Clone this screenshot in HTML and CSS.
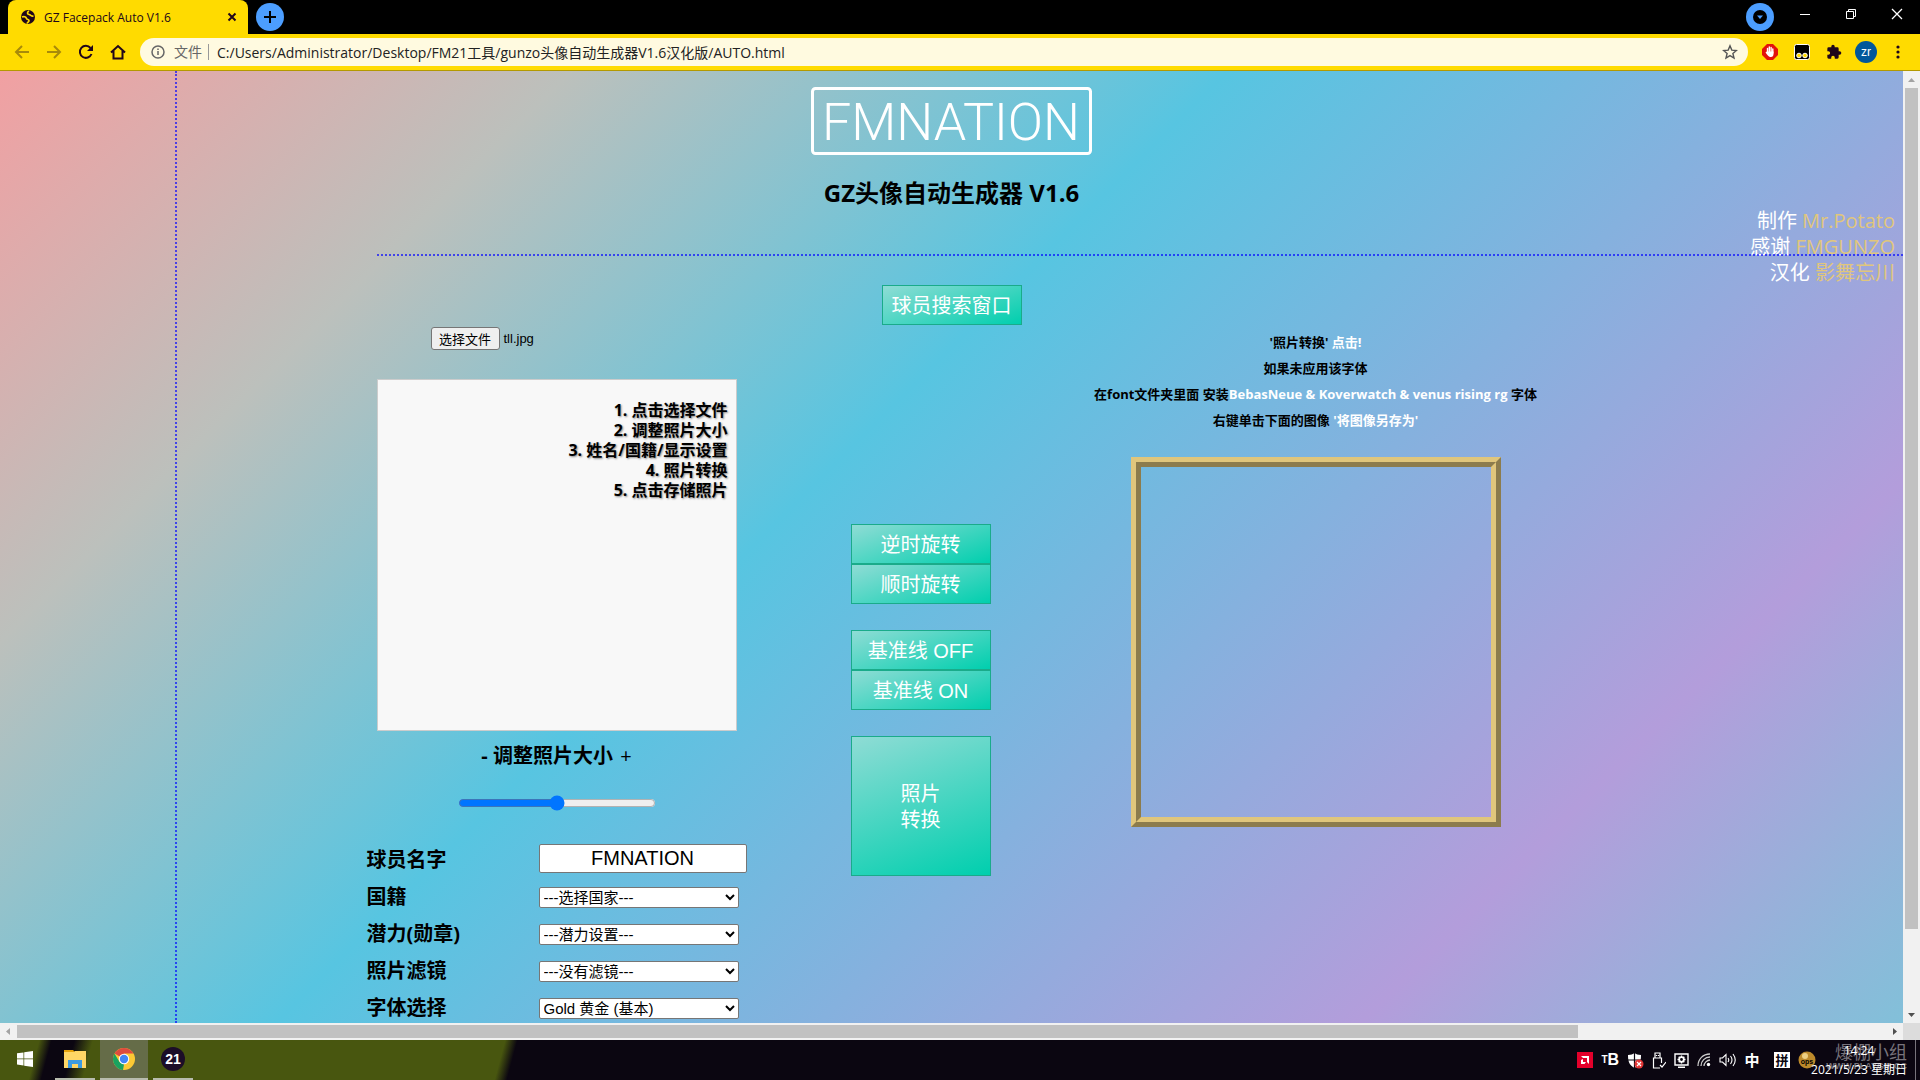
FILE: index.html
```
<!DOCTYPE html>
<html lang="zh-CN">
<head>
  <meta charset="UTF-8">
  <meta name="viewport" content="width=device-width, initial-scale=1.0">
  <title>GZ Facepack Auto V1.6</title>
  <link rel="stylesheet" href="styles.css">
</head>
<body>
<header class="tab-strip">
  <div class="tab">
    <svg class="tab-icon" width="16" height="16" viewBox="0 0 16 16"><circle cx="8" cy="8" r="7" fill="#20061a"/><path d="M2 8c2-1 4 0 4.500 1.500S9 10 9 11.500 7.500 13 7 14.500M9 2C7 3 7 5 9 5.500s2 2 4.500 1.500" fill="none" stroke="#ffdb00" stroke-width="1.700"/></svg>
    <span class="tab-title">GZ Facepack Auto V1.6</span>
    <button class="icon-button" aria-label="关闭标签页"><svg width="10" height="10" viewBox="0 0 10 10"><path d="M1.500 1.500l7 7m0-7l-7 7" stroke="#20061a" stroke-width="2"/></svg></button>
  </div>
  <button class="round-button" aria-label="新标签页"><svg width="14" height="14" viewBox="0 0 14 14"><path d="M7 1v12M1 7h12" stroke="#000" stroke-width="2"/></svg></button>
  <div class="window-buttons">
    <button class="round-button" aria-label="搜索标签页"><svg width="14" height="14" viewBox="0 0 14 14"><circle cx="7" cy="7" r="7" fill="#000"/><path d="M4 5.500h6L7 9z" fill="#4c9eff"/></svg></button>
    <button class="window-button" aria-label="最小化"><svg width="12" height="12" viewBox="0 0 12 12"><path d="M1 6.500h10" stroke="#fff"/></svg></button>
    <button class="window-button" aria-label="还原"><svg width="12" height="12" viewBox="0 0 12 12"><path d="M1.500 3.500h7v7h-7zM3.500 3V1.500h7v7H9" fill="none" stroke="#fff"/></svg></button>
    <button class="window-button" aria-label="关闭"><svg width="12" height="12" viewBox="0 0 12 12"><path d="M1 1l10 10M11 1L1 11" stroke="#fff" stroke-width="1.300"/></svg></button>
  </div>
</header>

<nav class="toolbar">
  <button class="icon-button nav-off" aria-label="后退"><svg width="16" height="16" viewBox="0 0 16 16"><path d="M15 8H2m6-6L2 8l6 6" fill="none" stroke="currentColor" stroke-width="2"/></svg></button>
  <button class="icon-button nav-off" aria-label="前进"><svg width="16" height="16" viewBox="0 0 16 16"><path d="M1 8h13M8 2l6 6-6 6" fill="none" stroke="currentColor" stroke-width="2"/></svg></button>
  <button class="icon-button" aria-label="重新加载"><svg width="16" height="16" viewBox="0 0 16 16"><path d="M13.500 10A6 6 0 1 1 12.500 4" fill="none" stroke="currentColor" stroke-width="2"/><path d="M15 1v6H9z" fill="currentColor"/></svg></button>
  <button class="icon-button" aria-label="主页"><svg width="16" height="16" viewBox="0 0 16 16"><path d="M1 8.500L8 2l7 6.500M3.500 7v7.500h9V7" fill="none" stroke="currentColor" stroke-width="2"/></svg></button>
  <div class="address-bar">
    <svg width="16" height="16" viewBox="0 0 16 16"><circle cx="8" cy="8" r="6" fill="none" stroke="#666" stroke-width="1.500"/><path d="M8 7v4M8 4.500v1.500" stroke="#666" stroke-width="1.500"/></svg>
    <label class="address-kind" for="address">文件</label>
    <input class="address-input" id="address" type="text" value="C:/Users/Administrator/Desktop/FM21工具/gunzo头像自动生成器V1.6汉化版/AUTO.html">
    <button class="icon-button" aria-label="收藏"><svg width="16" height="16" viewBox="0 0 16 16"><path d="M8 1.800l1.800 4.300 4.600.4-3.500 3 1.100 4.600-4-2.500-4 2.500 1.100-4.600-3.500-3 4.600-.4z" fill="none" stroke="#555" stroke-width="1.400"/></svg></button>
  </div>
  <button class="icon-button" aria-label="广告拦截"><svg width="16" height="16" viewBox="0 0 16 16"><path d="M5 0h6l5 5v6l-5 5H5l-5-5V5z" fill="#e3120b"/><path d="M5.500 9V4.500M7.300 8V3M9.100 8V3.500M10.800 9V5" stroke="#fff" stroke-width="1.400" stroke-linecap="round"/><path d="M4.800 7.500h6.700v2.500c0 2-1 3-2.500 3S6.500 12.500 5 10.500L3.500 8.500z" fill="#fff"/></svg></button>
  <button class="icon-button" aria-label="脚本管理"><svg width="16" height="16" viewBox="0 0 16 16"><rect x=".5" y=".5" width="15" height="15" rx="2" fill="#000" stroke="#fff"/><circle cx="5" cy="11.500" r="2.300" fill="#ffdb00" stroke="#fff"/><circle cx="11" cy="11.500" r="2.300" fill="#ffdb00" stroke="#fff"/></svg></button>
  <button class="icon-button" aria-label="扩展程序"><svg width="16" height="16" viewBox="0 0 24 24"><path d="M20.500 11H19V7a2 2 0 0 0-2-2h-4V3.500a2.500 2.500 0 0 0-5 0V5H4a2 2 0 0 0-2 2v3.800h1.500a2.700 2.700 0 0 1 0 5.400H2V20a2 2 0 0 0 2 2h3.800v-1.500a2.700 2.700 0 0 1 5.400 0V22H17a2 2 0 0 0 2-2v-4h1.500a2.500 2.500 0 0 0 0-5z" fill="currentColor"/></svg></button>
  <button class="avatar">zr</button>
  <button class="icon-button" aria-label="菜单"><svg width="16" height="16" viewBox="0 0 16 16"><circle cx="8" cy="3" r="1.600" fill="currentColor"/><circle cx="8" cy="8" r="1.600" fill="currentColor"/><circle cx="8" cy="13" r="1.600" fill="currentColor"/></svg></button>
</nav>

<div class="viewport">
  <main class="page">
    <svg class="logo" width="282" height="68" viewBox="0 0 282 68" role="img" aria-label="FMNATION">
      <rect x="1.500" y="1.500" width="278" height="65" rx="3" fill="none" stroke="#fff" stroke-width="3"/>
      <text class="logo-text" x="140" y="53" text-anchor="middle">FMNATION</text>
    </svg>
    <h1 class="title">GZ头像自动生成器 V1.6</h1>
    <button class="action search-button">球员搜索窗口</button>

    <div class="columns">
      <section class="editor">
        <div class="file-row">
          <button class="file-button" onclick="document.getElementById('photo').click()">选择文件</button>
          <input id="photo" type="file" accept="image/*" aria-label="选择文件" hidden>
          <span>tll.jpg</span>
        </div>
        <div class="photo-area">
          1. 点击选择文件<br>
          2. 调整照片大小<br>
          3. 姓名/国籍/显示设置<br>
          4. 照片转换<br>
          5. 点击存储照片
        </div>
        <label class="zoom-label" for="zoom">- 调整照片大小 <span class="plus">+</span></label>
        <input class="zoom" id="zoom" type="range" min="0" max="100" value="50">
        <form class="settings">
          <label for="name">球员名字</label>
          <input class="name-input" id="name" type="text" value="FMNATION">
          <label for="nation">国籍</label>
          <select id="nation"><option>---选择国家---</option></select>
          <label for="medal">潜力(勋章)</label>
          <select id="medal"><option>---潜力设置---</option></select>
          <label for="filter">照片滤镜</label>
          <select id="filter"><option>---没有滤镜---</option></select>
          <label for="font">字体选择</label>
          <select id="font"><option>Gold 黄金 (基本)</option></select>
        </form>
      </section>

      <section class="actions">
        <div class="action-group">
          <button class="action">逆时旋转</button>
          <button class="action">顺时旋转</button>
        </div>
        <div class="action-group">
          <button class="action">基准线 OFF</button>
          <button class="action">基准线 ON</button>
        </div>
        <button class="action convert-button">照片<br>转换</button>
      </section>

      <section class="result">
        <p class="hint">'照片转换' <em>点击!</em></p>
        <p class="hint">如果未应用该字体</p>
        <p class="hint">在font文件夹里面 安装<em>BebasNeue &amp; Koverwatch &amp; venus rising rg</em> 字体</p>
        <p class="hint">右键单击下面的图像 <em>'将图像另存为'</em></p>
        <div class="frame"></div>
      </section>
    </div>

    <div class="credits">
      制作 <span>Mr.Potato</span><br>
      感谢 <span>FMGUNZO</span><br>
      汉化 <span>影舞忘川</span>
    </div>
    <div class="guide guide-vertical"></div>
    <div class="guide guide-horizontal"></div>
  </main>
  <div class="scrollbar scrollbar-y">
    <svg width="17" height="17" viewBox="0 0 17 17"><path d="M5 11l3.500-4 3.500 4z" fill="#a3a3a3"/></svg>
    <div class="track"><div class="thumb"></div></div>
    <svg width="17" height="17" viewBox="0 0 17 17"><path d="M5 7l3.500 4L12 7z" fill="#505050"/></svg>
  </div>
  <div class="scrollbar scrollbar-x">
    <svg width="17" height="17" viewBox="0 0 17 17"><path d="M10 5L6 8.500l4 3.500z" fill="#a3a3a3"/></svg>
    <div class="track"><div class="thumb"></div></div>
    <svg width="17" height="17" viewBox="0 0 17 17"><path d="M7 5l4 3.500L7 12z" fill="#505050"/></svg>
  </div>
  <div class="scroll-corner"></div>
</div>

<footer class="taskbar">
  <button class="task start" aria-label="开始"><svg width="16" height="16" viewBox="0 0 16 16"><path d="M0 2.300l6.500-.9v6.100H0zM7.200 1.300L16 0v7.500H7.200zM0 8.300h6.500v6.100L0 13.500zM7.200 8.300H16V16l-8.800-1.300z" fill="#fff"/></svg></button>
  <button class="task open" aria-label="文件资源管理器"><svg width="22" height="20" viewBox="0 0 22 20"><path d="M0 1h9l2 2H0z" fill="#e8a40c"/><path d="M0 3h10l1-1h11v17H0z" fill="#ffd666"/><path d="M4 11h14v8h-4v-4H8v4H4z" fill="#3d9be0"/></svg></button>
  <button class="task open active" aria-label="Chrome"><svg width="24" height="24" viewBox="0 0 24 24"><circle cx="12" cy="12" r="11" fill="#fbc934"/><path d="M12 12L2.500 6.500A11 11 0 0 1 21.500 6.500H12z" fill="#dd4b3e"/><path d="M2.500 6.500L7.500 15 12 17.500 11 23A11 11 0 0 1 2.500 6.500z" fill="#1aa260"/><circle cx="12" cy="12" r="5.200" fill="#fff"/><circle cx="12" cy="12" r="4.200" fill="#4285f4"/></svg></button>
  <button class="task open"><span class="fm-icon">21</span></button>

  <div class="tray">
    <svg width="16" height="16" viewBox="0 0 16 16"><path d="M0 0h16v16H0z" fill="#e4002b"/><path d="M4 4h8v8L10 10V6H6zM4 8l2-1v3h3l-1.500 2H4z" fill="#fff"/></svg>
    <span class="tray-tb"><small>T</small>B</span>
    <svg width="17" height="17" viewBox="0 0 17 17"><path d="M1 3c3 0 5-1 6.500-2C9 2 11 3 14 3c0 6-1 10-6.500 13C2 13 1 9 1 3z" fill="#fff"/><path d="M7.500 1v15M1 8h13" stroke="#0b0611" stroke-width="1.200"/><circle cx="12" cy="12" r="4.500" fill="#e03535"/><path d="M10 10l4 4m0-4l-4 4" stroke="#fff" stroke-width="1.200"/></svg>
    <svg width="14" height="17" viewBox="0 0 14 17"><path d="M3 6V1h5v5M9.500 11V6h-8v10H8M4.500 3v1M6.500 3v1M8 13l2 2 4-5" fill="none" stroke="#fff" stroke-width="1.200"/></svg>
    <svg width="15" height="15" viewBox="0 0 15 15"><path d="M1 1h13v11H1zM4 14.300h7" fill="none" stroke="#fff" stroke-width="1.400"/><circle cx="7.500" cy="6.500" r="2.300" fill="none" stroke="#fff" stroke-width="1.700"/><path d="M7.500 2.500v1.500M7.500 9v1.500M3.500 6.500H5M10 6.500h1.500M4.700 3.700l1 1M9.300 8.300l1 1M10.300 3.700l-1 1M5.700 8.300l-1 1" stroke="#fff" stroke-width="1.400"/></svg>
    <svg width="14" height="14" viewBox="0 0 14 14"><path d="M1 13C1 6 6 1 13 1M4 13c0-5 4-9 9-9M7 13c0-3 3-6 6-6" fill="none" stroke="#ccc" stroke-width="1.300"/><circle cx="11.500" cy="11.500" r="1.700" fill="#fff"/></svg>
    <svg width="17" height="14" viewBox="0 0 17 14"><path d="M1 5h2.500L7 1.500v11L3.500 9H1zM9 5q1.500 2 0 4M11.500 3q3 4 0 8M14 1q4.500 6 0 12" fill="none" stroke="#fff" stroke-width="1.100"/></svg>
    <span class="ime">中</span>
    <span class="ime ime-box">拼</span>
    <svg width="18" height="18" viewBox="0 0 18 18"><circle cx="9" cy="9" r="8.500" fill="#bd8a2b"/><circle cx="7" cy="5" r="3" fill="#edcf83"/><text class="ball-text" x="9" y="13" text-anchor="middle">ops</text></svg>
  </div>
  <div class="clock">
    <span>14:24</span>
    <span>2021/5/23 星期日</span>
    <div class="watermark">爆棚小组<small>WWW.PLAYGM.CC</small></div>
  </div>
</footer>
</body>
</html>
```

FILE: styles.css
```
* {
  box-sizing: border-box;
}
body {
  margin: 0;
  height: 100vh;
  display: flex;
  flex-direction: column;
  overflow: hidden;
  font-family: "Open Sans", "Noto Sans CJK SC", sans-serif;
}
button {
  padding: 0;
  border: 0;
  background: none;
  font-family: "Liberation Sans", "Noto Sans CJK SC", sans-serif;
  cursor: pointer;
}
svg {
  display: block;
  flex: none;
}

/* browser window */
.tab-strip {
  flex: none;
  height: 34px;
  display: flex;
  align-items: center;
  gap: 8px;
  padding-left: 8px;
  background: #000;
}
.tab {
  width: 240px;
  height: 34px;
  display: flex;
  align-items: center;
  gap: 8px;
  padding: 0 8px 0 12px;
  border-radius: 8px 8px 0 0;
  background: #ffdb00;
}
.tab-title {
  flex: 1;
  font-size: 12px;
  color: #20061a;
}
.icon-button {
  flex: none;
  min-width: 16px;
  height: 16px;
  display: flex;
  align-items: center;
  justify-content: center;
  color: #20061a;
}
.nav-off {
  color: #a88a0a;
}
.round-button {
  width: 28px;
  height: 28px;
  display: flex;
  align-items: center;
  justify-content: center;
  border-radius: 50%;
  background: #4c9eff;
}
.window-buttons {
  display: flex;
  align-items: center;
  margin-left: auto;
}
.window-buttons .round-button {
  margin-right: 8px;
}
.window-button {
  width: 46px;
  height: 28px;
  display: flex;
  justify-content: center;
  align-items: center;
  padding-bottom: 6px;
}
.toolbar {
  flex: none;
  height: 37px;
  display: flex;
  align-items: center;
  gap: 16px;
  padding: 0 14px;
  border-bottom: 1px solid #b39900;
  background: #ffdb00;
}
.address-bar {
  flex: 1;
  height: 28px;
  display: flex;
  align-items: center;
  gap: 8px;
  margin: 0 -2px;
  padding: 0 10px;
  border-radius: 14px;
  background: #fffae0;
  font-size: 14px;
}
.address-kind {
  padding-right: 6px;
  border-right: 1px solid #999;
  line-height: 16px;
  color: #666;
}
.address-input {
  flex: 1;
  padding: 0;
  border: 0;
  background: none;
  font: inherit;
  color: #222;
}
.avatar {
  width: 22px;
  height: 22px;
  margin: 0 -3px;
  border-radius: 50%;
  background: #01579b;
  color: #fff;
  font-size: 12px;
}

/* page area with its scrollbars */
.viewport {
  flex: 1;
  min-height: 0;
  display: grid;
  grid-template-columns: 1fr 17px;
  grid-template-rows: minmax(0, 1fr) 17px;
}
.page {
  position: relative;
  display: flex;
  flex-direction: column;
  align-items: center;
  padding-top: 16px;
  overflow: hidden;
  background: linear-gradient(135deg, #f1a0a2 0%, #bcc0bc 20%, #57c5e1 43%, #b39ddb 81%, #82c0d9 100%);
}
.logo-text {
  font-family: Roboto, sans-serif;
  font-size: 52px;
  font-weight: 300;
  fill: #fff;
}
.title {
  margin: 22px 0 76px;
  font-size: 24px;
  line-height: 32px;
}
.action {
  width: 140px;
  height: 40px;
  padding-top: 2px;
  border: 1px solid #1aab8a;
  background: linear-gradient(160deg, #8fdcd5, #00cfae);
  font-size: 20px;
  line-height: 26px;
  color: #fff;
}
.search-button {
  flex: none;
}
.columns {
  width: 100%;
  display: grid;
  grid-template-columns: 380px 140px 442px;
  justify-content: center;
  gap: 104px;
}
.editor {
  display: flex;
  flex-direction: column;
  align-items: center;
  padding-top: 2px;
}
.file-row {
  align-self: flex-start;
  display: flex;
  align-items: center;
  gap: 4px;
  margin-left: 64px;
  font: 13px "Liberation Sans", sans-serif;
}
.file-button {
  width: 69px;
  height: 23px;
  border: 1px solid #767676;
  border-radius: 3px;
  background: #efefef;
  font-size: 13px;
}
.photo-area {
  width: 360px;
  height: 352px;
  margin-top: 29px;
  padding: 20px 8px;
  border: 1px solid #ccc;
  background: #f8f8f8;
  font-size: 16px;
  font-weight: bold;
  line-height: 20px;
  text-align: right;
  text-shadow: 1px 1px 2px #888;
}
.zoom-label {
  margin: 12px 0 26px;
  font-size: 20px;
  font-weight: bold;
  line-height: 26px;
}
.plus {
  margin-left: 2px;
  font-weight: normal;
}
.zoom {
  width: 198px;
  height: 16px;
  margin: 0;
}
.settings {
  width: 100%;
  display: grid;
  grid-template-columns: 172px 1fr;
  grid-auto-rows: 37px;
  align-items: center;
  margin-top: 29px;
  font-size: 20px;
  font-weight: bold;
}
.settings select {
  width: 200px;
  height: 21px;
  margin-top: 3px;
  border: 1px solid #767676;
  border-radius: 2px;
  padding: 0;
  background: #fff;
  font: 15px "Liberation Sans", "Noto Sans CJK SC", sans-serif;
  color: #000;
}
.name-input {
  width: 208px;
  height: 29px;
  border: 1px solid #767676;
  border-radius: 2px;
  font: 20px "Liberation Sans", sans-serif;
  text-align: center;
}
.actions {
  display: flex;
  flex-direction: column;
  gap: 26px;
  padding-top: 199px;
}
.action-group {
  display: flex;
  flex-direction: column;
}
.convert-button {
  height: 140px;
}
.result {
  display: flex;
  flex-direction: column;
  align-items: center;
  padding-top: 4px;
}
.hint {
  margin: 0;
  font-size: 13px;
  font-weight: bold;
  line-height: 26px;
  white-space: nowrap;
}
.hint em {
  font-style: normal;
  color: #fff;
}
.frame {
  width: 370px;
  height: 370px;
  margin-top: 24px;
  border: 10px ridge #e0c67c;
}
.credits {
  position: absolute;
  top: 137px;
  right: 8px;
  font-size: 20px;
  line-height: 26px;
  text-align: right;
  color: #fff;
}
.credits span {
  color: #e0c67c;
}
.guide {
  position: absolute;
  border: 0 dotted rgba(0, 0, 255, 0.65);
}
.guide-vertical {
  top: 0;
  bottom: 0;
  left: 175px;
  border-left-width: 2px;
}
.guide-horizontal {
  top: 183px;
  left: 377px;
  right: 0;
  border-top-width: 2px;
}
.scrollbar {
  display: flex;
  background: #f1f1f1;
}
.scrollbar-y {
  flex-direction: column;
}
.track {
  flex: 1;
}
.thumb {
  background: #c1c1c1;
}
.scrollbar-y .thumb {
  width: 13px;
  height: 91.6%;
  margin: 0 2px;
}
.scrollbar-x .thumb {
  width: 83.5%;
  height: 13px;
  margin: 2px 0;
}
.scroll-corner {
  background: #dcdcdc;
}

/* desktop taskbar */
.taskbar {
  flex: none;
  height: 40px;
  display: flex;
  align-items: center;
  gap: 5px;
  background: linear-gradient(105deg, #48560f 38px, #0b0611 50px, #0b0611 72px, #48560f 90px, #48560f 488px, #0b0611 500px);
}
.task {
  width: 40px;
  height: 40px;
  display: flex;
  align-items: center;
  justify-content: center;
  border-bottom: 2px solid transparent;
}
.start {
  width: 50px;
}
.open {
  border-color: #b8bcae;
}
.active {
  width: 48px;
  background: #656c48;
}
.fm-icon {
  width: 24px;
  height: 24px;
  border-radius: 50%;
  background: #1c0d28;
  font-size: 14px;
  font-weight: bold;
  line-height: 24px;
  color: #fff;
}
.tray {
  display: flex;
  align-items: center;
  gap: 8px;
  margin-left: auto;
  color: #fff;
}
.tray-tb {
  font: bold 16px "Liberation Sans", sans-serif;
  line-height: 16px;
  white-space: nowrap;
}
.tray-tb small {
  font-size: 10px;
  vertical-align: top;
}
.ime {
  width: 16px;
  font-size: 15px;
  font-weight: bold;
  line-height: 16px;
  text-align: center;
}
.ime-box {
  margin-left: 6px;
  background: #fff;
  font-size: 13px;
  color: #0b0611;
}
.ball-text {
  font: bold 7px "Liberation Sans", sans-serif;
}
.clock {
  position: relative;
  height: 40px;
  display: flex;
  flex-direction: column;
  align-items: center;
  justify-content: center;
  margin: 0 4px 0 -10px;
  padding-right: 8px;
  border-right: 1px solid #77737b;
  font-size: 12px;
  line-height: 19px;
  color: #fff;
}
.clock span {
  z-index: 1;
}
.watermark {
  position: absolute;
  top: 3px;
  right: 8px;
  font-size: 18px;
  line-height: 18px;
  text-align: right;
  color: #77737b;
}
.watermark small {
  display: block;
  font: bold 9px "Liberation Sans", sans-serif;
}
```
